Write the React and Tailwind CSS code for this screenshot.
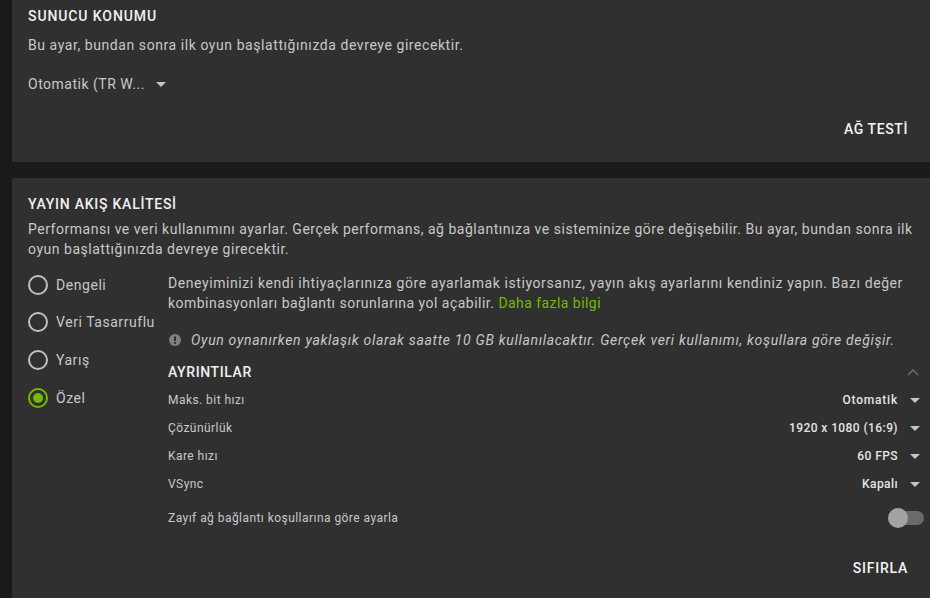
const FONT = "font-['Roboto',sans-serif]";

function Caret({ className = '' }) {
  return (
    <svg width="10" height="5" viewBox="0 0 10 5" className={className}>
      <path d="M0 0h10L5 5z" fill="#c4c4c4" />
    </svg>
  );
}

function Radio({ label, checked }) {
  return (
    <div className="flex items-center h-[37.67px]">
      <span className={`flex items-center justify-center w-5 h-5 rounded-full border-2 ${checked ? 'border-[#76b900]' : 'border-[#c0c0c0]'}`}>
        {checked && <span className="w-2.5 h-2.5 rounded-full bg-[#76b900]" />}
      </span>
      <span className="ml-2 text-sm tracking-[0.55px] text-[#c8c8c8] whitespace-nowrap">{label}</span>
    </div>
  );
}

function SettingRow({ label, value, valueTracking = 'tracking-[0.42px]' }) {
  return (
    <div className="flex items-center justify-between h-7">
      <span className="text-xs tracking-[0.45px] text-[#c8c8c8]">{label}</span>
      <span className="flex items-center gap-3 pr-1">
        <span className={`text-xs font-medium ${valueTracking} text-[#e4e4e4]`}>{value}</span>
        <Caret />
      </span>
    </div>
  );
}

export default function App() {
  return (
    <div className={`${FONT} h-[598px] w-[930px] overflow-hidden bg-[#1a1a1a] pl-3`}>
      {/* Server location */}
      <section className="h-[162px] bg-[#303030] pl-4 pr-[22px] flex flex-col">
        <h2 className="mt-[7px] text-sm leading-[18px] font-medium tracking-[0.9px] text-[#f0f0f0]">SUNUCU KONUMU</h2>
        <p className="mt-[10px] text-sm leading-5 tracking-[0.57px] text-[#c8c8c8]">Bu ayar, bundan sonra ilk oyun başlattığınızda devreye girecektir.</p>
        <div className="mt-[19px] flex items-center gap-[11px] h-5">
          <span className="text-sm tracking-[0.5px] text-[#c8c8c8]">Otomatik (TR W...</span>
          <Caret />
        </div>
        <div className="mt-[25px] text-right text-sm leading-5 font-medium tracking-[0.6px] text-[#f4f4f4]">AĞ TESTİ</div>
      </section>

      {/* Stream quality */}
      <section className="mt-4 h-[420px] bg-[#303030] pl-4 flex flex-col">
        <h2 className="mt-[17px] text-sm leading-[18px] font-medium tracking-[0.75px] text-[#f0f0f0]">YAYIN AKIŞ KALİTESİ</h2>
        <p className="mt-[6px] pr-[14px] text-sm leading-5 tracking-[0.52px] text-[#c8c8c8]">
          Performansı ve veri kullanımını ayarlar. Gerçek performans, ağ bağlantınıza ve sisteminize göre değişebilir. Bu ayar, bundan sonra ilk oyun başlattığınızda devreye girecektir.
        </p>
        <div className="mt-[7px] flex">
          <div className="w-[140px] shrink-0">
            <Radio label="Dengeli" />
            <Radio label="Veri Tasarruflu" />
            <Radio label="Yarış" />
            <Radio label="Özel" checked />
          </div>
          <div className="flex-1 pr-[6px] pt-[7px]">
            <p className="text-sm leading-5 tracking-[0.58px] text-[#c8c8c8]">
              Deneyiminizi kendi ihtiyaçlarınıza göre ayarlamak istiyorsanız, yayın akış ayarlarını kendiniz yapın. Bazı değer <span className="tracking-[0.47px]">kombinasyonları bağlantı sorunlarına yol açabilir.</span> <span className="text-[#76b900] tracking-[0.45px]">Daha fazla bilgi</span>
            </p>
            <div className="mt-[17px] flex items-center gap-[10px] h-5">
              <svg width="12" height="12" viewBox="0 0 12 12" className="ml-[1px] shrink-0">
                <circle cx="6" cy="6" r="6" fill="#808080" />
                <rect x="5" y="2.5" width="2" height="4.5" fill="#303030" />
                <rect x="5" y="8" width="2" height="1.8" fill="#303030" />
              </svg>
              <span className="text-sm italic tracking-[0.68px] text-[#c8c8c8] whitespace-nowrap">
                Oyun oynanırken yaklaşık olarak saatte 10 GB kullanılacaktır. Gerçek veri kullanımı, koşullara göre değişir.
              </span>
            </div>
            <div className="mt-[12px] flex items-center justify-between h-5">
              <h3 className="text-sm font-medium tracking-[0.6px] text-[#f0f0f0]">AYRINTILAR</h3>
              <svg width="12" height="7" viewBox="0 0 12 7" className="mr-[5px]">
                <path d="M1 6l5-5 5 5" fill="none" stroke="#6e6e6e" strokeWidth="1.5" />
              </svg>
            </div>
            <div className="mt-[4px]">
              <SettingRow label="Maks. bit hızı" value="Otomatik" valueTracking="tracking-[0.8px]" />
              <SettingRow label="Çözünürlük" value="1920 x 1080 (16:9)" />
              <SettingRow label="Kare hızı" value="60 FPS" />
              <SettingRow label="VSync" value="Kapalı" />
            </div>
            <div className="mt-[6px] flex items-center justify-between h-7">
              <span className="text-xs tracking-[0.45px] text-[#c8c8c8]">Zayıf ağ bağlantı koşullarına göre ayarla</span>
              <span className="relative w-[36px] h-[14px] rounded-full bg-[#6a6a6a]">
                <span className="absolute left-0 top-[-3px] w-5 h-5 rounded-full bg-[#a3a3a3]" />
              </span>
            </div>
            <div className="mt-[26px] pr-[16px] text-right text-sm leading-5 font-medium tracking-[0.75px] text-[#f4f4f4]">SIFIRLA</div>
          </div>
        </div>
      </section>
    </div>
  );
}
